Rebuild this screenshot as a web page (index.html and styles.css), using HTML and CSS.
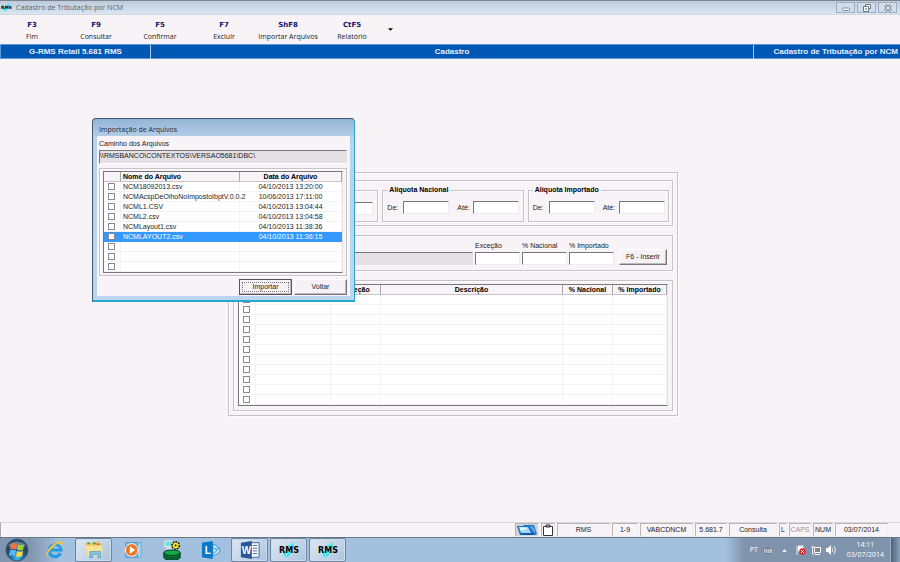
FILE: index.html
```html
<!DOCTYPE html>
<html lang="pt-BR">
<head>
<meta charset="utf-8">
<title>Cadastro de Tributação por NCM</title>
<link rel="stylesheet" href="styles.css">
</head>
<body>
<svg class="defs" aria-hidden="true">
  <symbol id="rms" viewBox="0 0 24 16">
    <path d="M8 15 6 10l4-2 1-4 5-4 1 5-4 3 1 3-3 4z" fill="#2ee6e6"/>
    <path d="M15 1 9 14" stroke="#a8ffff"/>
    <text x="12" y="11" text-anchor="middle" class="rms-text">RMS</text>
  </symbol>
</svg>
<header class="titlebar">
  <svg class="title-icon"><use href="#rms"/></svg>
  <h1>Cadastro de Tributação por NCM</h1>
  <div class="window-buttons">
    <button aria-label="Minimizar"><svg viewBox="0 0 10 8"><rect x="1.500" y="4" width="7" height="2.500" rx="1" fill="#fff" stroke="#7c8792"/></svg></button>
    <button aria-label="Restaurar"><svg viewBox="0 0 10 8"><path d="M3.500 3V.5h5v4H7M1.500 2.500h5v5h-5z" fill="#fff" stroke="#6c7680"/><path d="M3 5h2" stroke="#59636e"/></svg></button>
    <button aria-label="Fechar"><svg viewBox="0 0 10 8"><path d="M2 1l6 6M8 1L2 7" stroke="#7c8792" stroke-width="3"/><path d="M2 1l6 6M8 1L2 7" stroke="#fff"/></svg></button>
  </div>
</header>
<nav class="toolbar">
  <button><b>F3</b><span>Fim</span></button>
  <button><b>F9</b><span>Consultar</span></button>
  <button><b>F5</b><span>Confirmar</span></button>
  <button><b>F7</b><span>Excluir</span></button>
  <button><b>ShF8</b><span>Importar Arquivos</span></button>
  <button><b>CtF5</b><span>Relatório</span></button>
  <button class="more" aria-label="Mais opções"><svg viewBox="0 0 6 3"><path d="M0 0h6L3 3z"/></svg></button>
</nav>
<div class="banner">
  <span>G-RMS Retail 5.681 RMS</span><span>Cadastro</span><span>Cadastro de Tributação por NCM</span>
</div>
<main class="workspace">
  <section class="panel">
    <div class="group rates">
      <fieldset class="code-range" aria-label="Código">
        <input aria-label="Código final">
      </fieldset>
      <fieldset><legend>Alíquota Nacional</legend>
        <label for="n1">De:</label><input id="n1"><label for="n2">Até:</label><input id="n2">
      </fieldset>
      <fieldset><legend>Alíquota Importado</legend>
        <label for="i1">De:</label><input id="i1"><label for="i2">Até:</label><input id="i2">
      </fieldset>
    </div>
    <div class="group entry">
      <div class="field wide"><input aria-label="NCM" readonly></div>
      <div class="field"><label for="exc">Exceção</label><input id="exc"></div>
      <div class="field"><label for="nac">% Nacional</label><input id="nac"></div>
      <div class="field"><label for="imp">% Importado</label><input id="imp"></div>
      <button class="btn">F6 - Inserir</button>
    </div>
    <div class="group">
      <table class="grid items">
        <colgroup><col class="check"><col class="code"><col class="rate"><col><col class="rate"><col class="last"></colgroup>
        <thead><tr><th></th><th></th><th>Exceção</th><th>Descrição</th><th>% Nacional</th><th>% Importado</th></tr></thead>
        <tbody>
          <tr><td><input type="checkbox" aria-label="Item 1"></td><td></td><td></td><td></td><td></td><td></td></tr>
          <tr><td><input type="checkbox" aria-label="Item 2"></td><td></td><td></td><td></td><td></td><td></td></tr>
          <tr><td><input type="checkbox" aria-label="Item 3"></td><td></td><td></td><td></td><td></td><td></td></tr>
          <tr><td><input type="checkbox" aria-label="Item 4"></td><td></td><td></td><td></td><td></td><td></td></tr>
          <tr><td><input type="checkbox" aria-label="Item 5"></td><td></td><td></td><td></td><td></td><td></td></tr>
          <tr><td><input type="checkbox" aria-label="Item 6"></td><td></td><td></td><td></td><td></td><td></td></tr>
          <tr><td><input type="checkbox" aria-label="Item 7"></td><td></td><td></td><td></td><td></td><td></td></tr>
          <tr><td><input type="checkbox" aria-label="Item 8"></td><td></td><td></td><td></td><td></td><td></td></tr>
          <tr><td><input type="checkbox" aria-label="Item 9"></td><td></td><td></td><td></td><td></td><td></td></tr>
          <tr><td><input type="checkbox" aria-label="Item 10"></td><td></td><td></td><td></td><td></td><td></td></tr>
          <tr><td><input type="checkbox" aria-label="Item 11"></td><td></td><td></td><td></td><td></td><td></td></tr>
        </tbody>
      </table>
    </div>
  </section>
</main>
<section class="dialog" role="dialog" aria-labelledby="dlg-title">
  <h2 id="dlg-title">Importação de Arquivos</h2>
  <div class="dialog-body">
    <label for="path">Caminho dos Arquivos</label>
    <input id="path" class="path" readonly value="\\RMSBANCO\CONTEXTOS\VERSAO5681\DBC\">
    <div class="group">
      <table class="grid files">
        <colgroup><col class="check"><col><col class="date"></colgroup>
        <thead><tr><th></th><th>Nome do Arquivo</th><th>Data do Arquivo</th></tr></thead>
        <tbody>
          <tr><td><input type="checkbox" aria-label="NCM18092013.csv"></td><td>NCM18092013.csv</td><td>04/10/2013 13:20:00</td></tr>
          <tr><td><input type="checkbox" aria-label="NCMAcspDeOlhoNoImpostoIbptV.0.0.2"></td><td>NCMAcspDeOlhoNoImpostoIbptV.0.0.2</td><td>10/06/2013 17:11:00</td></tr>
          <tr><td><input type="checkbox" aria-label="NCML1.CSV"></td><td>NCML1.CSV</td><td>04/10/2013 13:04:44</td></tr>
          <tr><td><input type="checkbox" aria-label="NCML2.csv"></td><td>NCML2.csv</td><td>04/10/2013 13:04:58</td></tr>
          <tr><td><input type="checkbox" aria-label="NCMLayout1.csv"></td><td>NCMLayout1.csv</td><td>04/10/2013 11:38:36</td></tr>
          <tr class="selected"><td><input type="checkbox" aria-label="NCMLAYOUT2.csv"></td><td>NCMLAYOUT2.csv</td><td>04/10/2013 11:36:15</td></tr>
          <tr><td><input type="checkbox" aria-label="Linha 7"></td><td></td><td></td></tr>
          <tr><td><input type="checkbox" aria-label="Linha 8"></td><td></td><td></td></tr>
          <tr><td><input type="checkbox" aria-label="Linha 9"></td><td></td><td></td></tr>
        </tbody>
      </table>
    </div>
    <div class="actions"><button class="btn default">Importar</button><button class="btn">Voltar</button></div>
  </div>
</section>
<footer class="statusbar">
  <span class="s-pic"><svg viewBox="0 0 22 12"><path d="M1 2h6l1-1h10l3 9-2 1H4z" fill="#1c6fd0"/><path d="M3 3h9l3 6H5z" fill="#9fd8fb"/><path d="M3 3l9 1-7 3z" fill="#e5f7ff"/><path d="M14 2l5 7M16 2l3 5" stroke="#7cc4f5"/><path d="M5 10h13" stroke="#0a3f98"/></svg></span>
  <span class="s-clip"><svg viewBox="0 0 12 12"><path d="M1.500 2.500h9v9h-9z" fill="#fff" stroke="#333"/><path d="M4 1h4v2H4z" fill="#bbb" stroke="#333"/></svg></span>
  <span class="s-wide">RMS</span><span class="s-small">1-9</span><span class="s-wide">VABCDNCM</span><span class="s-ver">5.681.7</span><span class="s-mode">Consulta</span><span class="s-flag">L</span><span class="s-caps">CAPS</span><span class="s-num">NUM</span><span class="s-wide">03/07/2014</span>
</footer>
<div class="taskbar">
  <button class="task start" aria-label="Iniciar"><svg viewBox="0 0 24 24"><defs><radialGradient id="orb" cy=".85"><stop offset="0" stop-color="#43c4ee"/><stop offset=".6" stop-color="#1d659f"/><stop offset="1" stop-color="#294968"/></radialGradient></defs><circle cx="12" cy="12" r="11" fill="url(#orb)" stroke="#365a7b"/><path d="M3 7q9-7 18 0-4 4-9 4T3 7" fill="#fff" opacity=".3"/><path d="M6 6q3-1.500 6 0l-1 5.500q-3-1.500-6 0z" fill="#f3713a"/><path d="M13 6.500q3 1.500 6 0l-1 5.500q-3 1-6-.5z" fill="#9bd23c"/><path d="M5 12.500q3-1.500 6 0l-1 5.500q-3-1.500-6 0z" fill="#58b9f2"/><path d="M12 13q3 1.500 6 0l-1 5.500q-3 1-6-.5z" fill="#ffd640"/></svg></button>
  <button class="task" aria-label="Internet Explorer"><svg viewBox="0 0 22 22"><path d="M17 14.500A6.500 6.500 0 1 1 17.500 11H6" fill="none" stroke="#1d9de4" stroke-width="3.500"/><path d="M6 9q5-4 10 0" fill="none" stroke="#79d3fa" stroke-width="1"/><path d="M2 19C-1 13 9 2 17 1.500q4 0 2 5 .5-3-2.500-3C11 4 2 14 2 19z" fill="#f6c23a"/></svg></button>
  <button class="task open" aria-label="Explorador de Arquivos"><svg viewBox="0 0 24 22"><path d="M2 3h7l1-2h8l1 3h2v14H3z" fill="#e9c768"/><path d="M4 3h3M11 3h3" stroke="#31a052" stroke-width="2"/><path d="M15 4h4" stroke="#e26a42" stroke-width="2"/><path d="M2 6h20v12H4z" fill="#f7e08f"/><path d="M5 7v11M9 6v8" stroke="#fff2c5"/><path d="M7 20v-7h13v7h-3v-4h-7v4z" fill="#8bc9ed" stroke="#4d9cca"/></svg></button>
  <button class="task" aria-label="Windows Media Player"><svg viewBox="0 0 22 22"><path d="M9 3h11v16H9z" fill="#a4d5f3" stroke="#62a7d5"/><path d="M3 3h13v16H3z" fill="#78b9e8" stroke="#5295c8"/><circle cx="9.500" cy="11" r="7" fill="#ee7625" stroke="#fff"/><path d="M7.500 7v8l6-4z" fill="#fff"/></svg></button>
  <button class="task" aria-label="Banco de dados"><svg viewBox="0 0 22 22"><path d="M2 14v5q0 3 9 3t9-3v-5z" fill="#087634" stroke="#032"/><ellipse cx="11" cy="14" rx="9" ry="3" fill="#16ab4b" stroke="#032"/><path d="M3 18q8 4 17 0" fill="none" stroke="#042"/><path d="M3 1h8v6H3z" fill="#6ce1dd" stroke="#eee"/><path d="M4 9h8" stroke="#ddd" stroke-width="2"/><circle cx="15" cy="6" r="4" fill="#f0e52a" stroke="#222" stroke-width="2" stroke-dasharray="2 1"/><circle cx="15" cy="6" r="3" fill="#f0e52a"/><circle cx="15" cy="6" r="1"/></svg></button>
  <button class="task" aria-label="Lync"><svg viewBox="0 0 22 22"><path d="M13 5q7 1 8 6-1 5-8 6z" fill="#cfe7f8" stroke="#2f91d4"/><path d="M14 9l4 2-4 4M17 8l3 2" fill="none" stroke="#1681cc"/><path d="M1 3l12-2v20L1 19z" fill="#0878c9"/><text x="4" y="15" class="app-letter">L</text></svg></button>
  <button class="task open" aria-label="Word"><svg viewBox="0 0 22 22"><path d="M11 3h10v16H11z" fill="#fff" stroke="#345a9b"/><path d="M14 6h5M14 9h5M14 12h5M14 15h5" stroke="#345a9b"/><path d="M1 3l12-2v20L1 19z" fill="#2b579a"/><text x="2" y="15" class="app-letter">W</text></svg></button>
  <button class="task open rms" aria-label="RMS 1"><svg><use href="#rms"/></svg></button>
  <button class="task open rms" aria-label="RMS 2"><svg><use href="#rms"/></svg></button>
  <div class="tray">
    <span class="lang">PT</span>
    <svg class="kbd" viewBox="0 0 10 8"><rect x=".5" y="2.500" width="9" height="5" rx="1" fill="#c5c9cd" stroke="#777f87"/><path d="M2 4h6M2 6h6" stroke="#68717a" stroke-dasharray="1 1"/><path d="M4 2q0-1 2-2" fill="none" stroke="#777f87"/></svg>
    <svg class="up" viewBox="0 0 6 3"><path d="M0 3h6L3 0z" fill="#fff"/></svg>
    <svg viewBox="0 0 10 10"><path d="M1 1v9M2 1h5v5H2" fill="#fff" stroke="#eee"/><circle cx="6.500" cy="6.500" r="3.200" fill="#d92b2b"/><path d="M5 5l3 3M8 5L5 8" stroke="#fff"/></svg>
    <svg viewBox="0 0 10 10"><path d="M3.500 2.500h6v5h-6zM4 9.500h5" fill="#7d8793" stroke="#fff"/><path d="M1.500 1v8h2M.5 2h3" fill="none" stroke="#eee"/></svg>
    <svg viewBox="0 0 10 10"><path d="M0 3h2l3-3v10L2 7H0z" fill="#fff"/><path d="M6 3q2 2 0 4M8 1q3 4 0 8" fill="none" stroke="#e5e9ee"/></svg>
    <div class="clock"><span>14:11</span><span>03/07/2014</span></div>
    <button class="show-desktop" aria-label="Mostrar área de trabalho"></button>
  </div>
</div>
</body>
</html>
```
FILE: styles.css
```css
* { box-sizing: border-box; }
body {
  margin: 0;
  min-height: 100vh;
  display: flex;
  flex-direction: column;
  position: relative;
  background: #f7f3f7;
  color: #1c1c1c;
  font: 7px/8px "Liberation Sans", Arial, sans-serif;
}
button, input { font: inherit; color: inherit; margin: 0; padding: 0; }
button { border: 0; background: none; }
h1, h2 { margin: 0; font: 7px/10px "Open Sans", sans-serif; }
svg { display: block; flex-shrink: 0; }
.defs { position: absolute; width: 0; height: 0; }
.rms-text { font: bold 8px "DejaVu Sans", sans-serif; fill: #000; }
.app-letter { font: bold 11px "Liberation Sans", sans-serif; fill: #fff; }

.titlebar {
  display: flex;
  align-items: center;
  height: 15px;
  padding: 0 3px 0 0;
  gap: 3px;
  background: linear-gradient(#becbdc, #d9e5f3);
  border-top: 1px solid #7b848e;
  border-bottom: 1px solid #d3d8dc;
  color: #56616e;
}
.title-icon { width: 13px; height: 9px; }
.window-buttons { display: flex; gap: 2px; margin-left: auto; }
.window-buttons button {
  width: 19px;
  height: 11px;
  border: 1px solid #9dafc2;
  background: #cfdcea;
}
.window-buttons svg { width: 10px; height: 8px; margin: auto; }

.toolbar { display: flex; height: 29px; font: 7px/12px "Open Sans", sans-serif; }
.toolbar button { width: 64px; padding-top: 4px; display: flex; flex-direction: column; align-items: center; white-space: nowrap; }
.toolbar b { color: #14146e; font-family: "DejaVu Sans", sans-serif; }
.toolbar .more { width: 12px; padding-top: 13px; }
.more svg { width: 5px; height: 3px; }

.banner {
  display: grid;
  grid-template-columns: 149px 1fr 147px;
  height: 15px;
  background: #0058b4;
  border: 1px solid #5c9bd8;
  border-width: 1px 0 1px 1px;
  color: #e4efff;
  font: bold 8px/14px "Liberation Sans", sans-serif;
  text-align: center;
  white-space: nowrap;
}
.banner span + span { border-left: 1px solid #a5c9ec; }
.banner span:last-child { text-align: right; padding-right: 2px; }

.workspace { flex: 1; padding: 113px 0 16px 6px; }
.panel {
  width: 450px;
  margin: 0 auto;
  padding: 7px 4px 4px;
  display: flex;
  flex-direction: column;
  gap: 9px;
}
.panel, .group, fieldset { border: 1px solid #c6c2c6; box-shadow: inset 1px 1px #fdfbfd, 1px 1px #fdfbfd; }
.group { padding: 3px 4px 4px; }
.rates { display: flex; gap: 4px; height: 46px; padding: 5px 3px; }
fieldset {
  flex: 1;
  min-width: 0;
  height: 36px;
  margin: 0;
  padding: 7px 4px 0;
  white-space: nowrap;
}
.code-range { height: 32px; margin-top: 4px; padding-top: 11px; text-align: right; }
legend { padding: 0 2px; font-weight: bold; color: #000; line-height: 8px; }
fieldset label { display: inline-block; width: 16px; vertical-align: middle; }
input:not([type]) {
  height: 13px;
  min-width: 0;
  border: 1px solid;
  border-color: #77777b #efebef #efebef #77777b;
  background: #fff;
}
fieldset input { width: 46px; vertical-align: middle; }
fieldset input + label { margin-left: 8px; }

.entry { display: flex; align-items: flex-end; gap: 2px; height: 36px; padding: 0 5px 5px; }
.field { display: flex; flex-direction: column; gap: 2px; width: 45px; white-space: nowrap; }
.wide { flex: 1; }
.field.wide input { background: #e4e0e4; border-color: #77777b #e4e0e4 #e4e0e4 #e4e0e4; }
.btn {
  border: 1px solid;
  border-color: #fff #77777b #77777b #fff;
  box-shadow: inset -1px -1px #bcb8bc;
  background: #f5f1f5;
  height: 16px;
}
.entry .btn { width: 48px; margin-left: 3px; }

.grid {
  width: 100%;
  table-layout: fixed;
  border-collapse: separate;
  border-spacing: 0;
  background: #fff;
  border: 1px solid;
  border-color: #77777b #e4e0e4 #77777b #77777b;
}
.grid th {
  height: 10px;
  padding: 0;
  background: #f7f3f7;
  border-right: 1px solid #aaa6aa;
  border-bottom: 1px solid #c8c4c8;
  color: #000;
  white-space: nowrap;
}
.grid td { height: 10px; padding: 0; border: 1px solid #f4f2f4; border-width: 0 1px 1px 0; line-height: 8px; white-space: nowrap; }
.grid td:first-child { padding-right: 2px; }
.grid input { appearance: none; display: block; width: 7px; height: 7px; margin: 0 auto; border: 1px solid #8a8a8e; background: #fff; }
.check { width: 17px; }
.code { width: 75px; }
.rate { width: 50px; }
.last { width: 54px; }
.date { width: 102px; }
.files th:nth-child(2) { text-align: left; padding-left: 2px; }
.files td:nth-child(2) { padding-left: 2px; }
.files td:nth-child(3) { text-align: center; }
.grid .selected td { background: #3399ff; color: #fff; border-color: #3399ff; }

/* Floats over the registration form. */
.dialog {
  position: absolute;
  left: 92px;
  top: 118px;
  width: 263px;
  padding: 0 4px 4px;
  border: 1px solid #425a70;
  border-right-color: #23a9cd;
  border-bottom: 2px solid #23a9cd;
  border-radius: 4px 4px 0 0;
  background: linear-gradient(#94b4d5, #b9d1ea 20px, #bed5ef);
}
.dialog h2 { height: 17px; padding: 6px 2px 0; color: #1d2a38; }
.dialog-body { background: #f7f3f7; padding: 4px 3px 1px 2px; display: flex; flex-direction: column; }
.dialog .path { margin: 2px 0 4px; background: #e4e0e4; height: 14px; padding-bottom: 3px; border-right-color: #e4e0e4; border-bottom-color: #fff; }
.dialog .group { padding: 2px 3px; }
.actions { display: flex; justify-content: flex-end; gap: 2px; margin-top: 3px; }
.actions .btn { width: 53px; }
.btn.default { border-color: #55555a; outline: 1px dotted #777; outline-offset: -4px; }

.statusbar { display: flex; height: 15px; padding-right: 12px; gap: 2px; justify-content: flex-end; border-top: 1px solid #d9d5d9; border-left: 1px solid #aaa; text-align: center; }
.statusbar span { border: 1px solid; border-color: #b8b4b8 #eee #eee #b8b4b8; line-height: 12px; white-space: nowrap; }
.statusbar .s-pic { width: 24px; background: #cfd5cf; }
.s-clip { width: 14px; }
.statusbar svg { width: 100%; height: 12px; }
.s-wide { width: 53px; }
.s-small { width: 26px; }
.s-ver { width: 32px; }
.s-mode { width: 48px; }
.s-flag { width: 8px; }
.s-caps { width: 22px; color: #9a969a; }
.s-num { width: 20px; }

.taskbar {
  display: flex;
  height: 25px;
  gap: 2px;
  border-top: 1px solid #65788a;
  background: linear-gradient(90deg, #8295ae 30px, #a3c1df 60px, #a3c1df calc(100% - 175px), #8093ac calc(100% - 155px));
}
.task { width: 37px; display: grid; place-items: center; }
.task svg { width: 20px; height: 20px; }
.start { width: 34px; }
.start svg { width: 24px; height: 24px; }
.open { border: 1px solid #6f86a0; border-radius: 2px; background: linear-gradient(135deg, #dce7f2, #adc5de); box-shadow: inset 0 0 0 1px #cddbea; }
.task.rms svg { width: 24px; height: 16px; }
.tray { margin-left: auto; display: flex; align-items: center; gap: 5px; color: #fff; font: 7px/10px "Open Sans", sans-serif; }
.tray svg { width: 10px; height: 10px; }
.tray .up { width: 5px; height: 3px; margin: 0 4px; }
.clock { display: flex; flex-direction: column; align-items: center; margin: 0 1px 0 6px; }
.show-desktop { width: 10px; height: 24px; border-left: 1px solid #a0b2c5; background: linear-gradient(90deg, #4e6379, #8ba1b7); }
```
